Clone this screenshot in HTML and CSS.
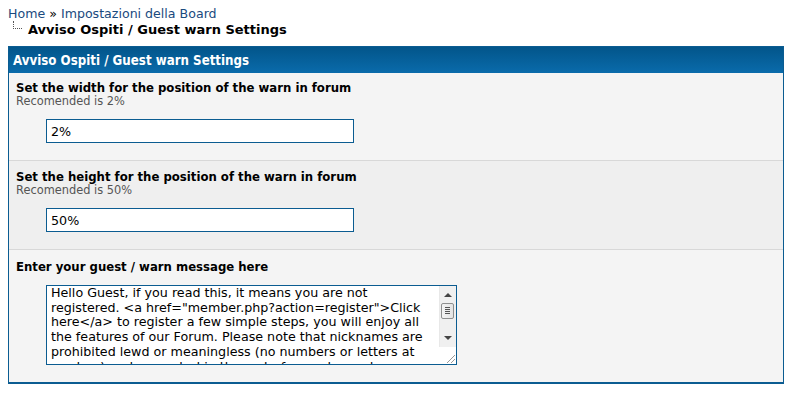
FILE: index.html
```html
<!DOCTYPE html>
<html lang="it">
<head>
    <meta charset="UTF-8">
    <title>Avviso Ospiti / Guest warn Settings</title>
    <link rel="stylesheet" href="styles.css">
</head>
<body>
    <div class="navigation">
        <a href="#">Home</a> &raquo; <a href="#">Impostazioni della Board</a><br>
        <span class="nav-tree"></span><span class="active">Avviso Ospiti / Guest warn Settings</span>
    </div>

    <table class="tborder" cellspacing="0" cellpadding="0">
        <tr>
            <td class="thead">Avviso Ospiti / Guest warn Settings</td>
        </tr>
        <tr>
            <td class="trow1">
                <div class="setting-title">Set the width for the position of the warn in forum</div>
                <div class="setting-desc">Recomended is 2%</div>
                <div class="setting-field"><input type="text" class="textbox" value="2%"></div>
            </td>
        </tr>
        <tr>
            <td class="trow2">
                <div class="setting-title">Set the height for the position of the warn in forum</div>
                <div class="setting-desc">Recomended is 50%</div>
                <div class="setting-field"><input type="text" class="textbox" value="50%"></div>
            </td>
        </tr>
        <tr>
            <td class="trow1 last">
                <div class="setting-title">Enter your guest / warn message here</div>
                <div class="setting-field area-field">
                    <div class="textarea-wrap">
                        <textarea class="textarea">Hello Guest, if you read this, it means you are not registered. &lt;a href="member.php?action=register"&gt;Click here&lt;/a&gt; to register a few simple steps, you will enjoy all the features of our Forum. Please note that nicknames are prohibited lewd or meaningless (no numbers or letters at random) and respected in the rest of our rules and regulations, so that the community can grow in a healthy way.</textarea>
                        <!-- barra di scorrimento classica -->
                        <div class="scrollbar">
                            <span class="arrow up"></span>
                            <span class="thumb"><i></i><i></i><i></i><i></i></span>
                            <span class="arrow down"></span>
                        </div>
                        <span class="grip"></span>
                    </div>
                </div>
            </td>
        </tr>
    </table>
</body>
</html>
```

FILE: styles.css
```css
body {
    margin: 8px;
    background: #fff;
    color: #000;
    font-family: "DejaVu Sans", Verdana, sans-serif;
    font-size: 13px;
}

a {
    color: #1a4a7e;
    text-decoration: none;
}

/* briciole di pane */
.navigation {
    line-height: 15px;
    margin-top: -2px;
    font-size: 12.6px;
}

.navigation .active {
    font-size: 13px;
    font-weight: bold;
}

.nav-tree {
    display: inline-block;
    width: 8px;
    height: 7px;
    margin: 0 6px 0 5px;
    border-left: 1px dotted #555;
    border-bottom: 1px dotted #555;
    vertical-align: 5px;
}

.tborder {
    width: 100%;
    margin-top: 9px;
    border: 1px solid #0b5c91;
    border-bottom-width: 2px;
    border-collapse: separate;
    background: #f4f4f4;
}

.thead {
    height: 26px;
    padding: 0 4px;
    background: linear-gradient(#02558a, #0a6bab);
    color: #fff;
    font-family: "DejaVu Sans Condensed", "DejaVu Sans", sans-serif;
    font-weight: bold;
    font-size: 13.2px;
}

.trow1,
.trow2 {
    padding: 7px 7px 17px;
    border-bottom: 1px solid #d8d8d8;
    vertical-align: top;
}

.trow1 {
    background: #f4f4f4;
}

.trow2 {
    background: #efefef;
    padding-top: 8px;
    padding-bottom: 17px;
}

.trow1.last {
    border-bottom: 0;
    padding-top: 9px;
    padding-bottom: 17px;
}

.setting-title {
    font-family: "DejaVu Sans Condensed", "DejaVu Sans", sans-serif;
    font-weight: bold;
    line-height: 15px;
}

.setting-desc {
    font-size: 11.4px;
    line-height: 13px;
    color: #555;
}

.setting-field {
    margin: 11px 0 0 30px;
}

.setting-field.area-field {
    margin-top: 11px;
}

.textbox {
    box-sizing: border-box;
    display: block;
    width: 308px;
    height: 24px;
    margin: 0;
    padding: 2px 4px;
    border: 1px solid #0b5c91;
    background: #fff;
    font-family: "DejaVu Sans", sans-serif;
    font-size: 12.7px;
    color: #000;
}

.textarea-wrap {
    position: relative;
    width: 411px;
    height: 80px;
}

.textarea {
    box-sizing: border-box;
    display: block;
    width: 100%;
    height: 100%;
    margin: 0;
    padding: 0 22px 0 4px;
    border: 1px solid #0b5c91;
    background: #fff;
    font-family: "DejaVu Sans", sans-serif;
    font-size: 12.7px;
    line-height: 14.7px;
    color: #000;
    overflow: hidden;
    resize: none;
}

.scrollbar {
    position: absolute;
    top: 1px;
    right: 1px;
    width: 17px;
    height: 61px;
    background: #f0f0f0;
    border-left: 1px solid #e8e8e8;
    box-sizing: border-box;
}

.arrow {
    position: absolute;
    left: 4px;
    width: 0;
    height: 0;
    border-left: 4px solid transparent;
    border-right: 4px solid transparent;
}

.arrow.up {
    top: 7px;
    border-bottom: 4px solid #444;
}

.arrow.down {
    bottom: 7px;
    border-top: 4px solid #444;
}

.thumb {
    position: absolute;
    top: 17px;
    left: 1px;
    width: 13px;
    height: 16px;
    box-sizing: border-box;
    padding: 3px 3px 0;
    border: 1px solid #8e8f8f;
    border-radius: 2px;
    background: linear-gradient(90deg, #f3f3f3, #e4e4e4);
    display: flex;
    flex-direction: column;
    gap: 1px;
}

.thumb i {
    display: block;
    height: 1px;
    background: #555;
}

.grip {
    position: absolute;
    right: 2px;
    bottom: 2px;
    width: 8px;
    height: 8px;
    background: linear-gradient(135deg, transparent 45%, #999 45%, #999 55%, transparent 55%, transparent 70%, #999 70%, #999 80%, transparent 80%);
}
```
